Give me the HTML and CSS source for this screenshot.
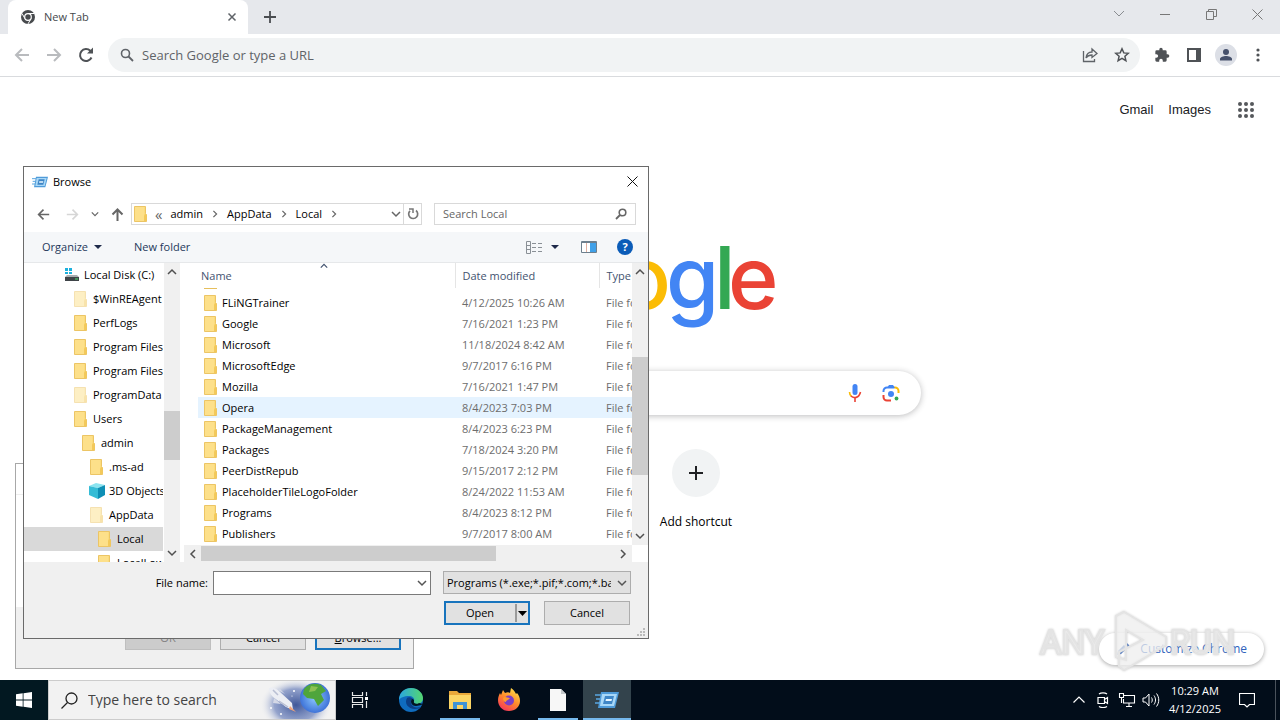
FILE: index.html
```html
<!DOCTYPE html>
<html lang="en">
<head>
  <meta charset="UTF-8" />
  <title>New Tab</title>
  <link rel="stylesheet" href="styles.css">
</head>
<body>
  <!-- shared icons -->
  <svg class="defs" width="0" height="0" aria-hidden="true">
    <symbol id="folder" viewBox="0 0 16 16">
      <path d="M1.500 .5h11v7l1 1v7h-12z" fill="#fbdc7c" stroke="#ecc565"/>
      <path d="M2 1h9v14H2z" fill="#fde08a"/>
      <path d="M11 15V9.500l1.500-2 1 2V15z" fill="#f3c95a"/>
    </symbol>
    <symbol id="chev-down" viewBox="0 0 10 10"><path d="M1 3l4 4 4-4" fill="none" stroke="currentColor" stroke-width="1.500"/></symbol>
    <symbol id="chev-up" viewBox="0 0 10 10"><path d="M1 7l4-4 4 4" fill="none" stroke="currentColor" stroke-width="1.500"/></symbol>
    <symbol id="chev-left" viewBox="0 0 10 10"><path d="M7 1L3 5l4 4" fill="none" stroke="currentColor" stroke-width="1.500"/></symbol>
    <symbol id="chev-right" viewBox="0 0 10 10"><path d="M3 1l4 4-4 4" fill="none" stroke="currentColor" stroke-width="1.500"/></symbol>
    <symbol id="arrow-left" viewBox="0 0 16 16"><path d="M15 8H2M8 2L2 8l6 6" fill="none" stroke="currentColor" stroke-width="2"/></symbol>
    <symbol id="arrow-right" viewBox="0 0 16 16"><path d="M1 8h13M8 2l6 6-6 6" fill="none" stroke="currentColor" stroke-width="2"/></symbol>
    <symbol id="run" viewBox="0 0 24 18">
      <path d="M6 1h18l-4 16H3z" fill="#4f9bd9"/>
      <path d="M7 3h15l-3 12H5z" fill="#a9d8f7"/>
      <path d="M10 5h9l-2 8H8z" fill="#3f86c6"/>
      <path d="M11 8h6l-.500 2h-6z" fill="#e8f6ff"/>
      <path d="M0 4h6M1 8h4M0 12h5" stroke="#5aa7e0" stroke-width="1.500"/>
    </symbol>
  </svg>

  <main class="desktop">
    <section class="browser">
      <header class="tabstrip">
        <div class="tab">
          <svg class="favicon" width="14" height="14" viewBox="0 0 14 14">
            <circle cx="7" cy="7" r="7" fill="#474a4d"/>
            <path d="M7 3.500h6.200M4 8.700L1 3.500M10 8.700L7 13.900" stroke="#fff" stroke-width="1"/>
            <circle cx="7" cy="7" r="3.300" fill="#474a4d" stroke="#fff" stroke-width="1.200"/>
          </svg>
          <span class="tab-title">New Tab</span>
          <button class="icon-btn" aria-label="Close tab"><svg width="10" height="10" viewBox="0 0 10 10"><path d="M1.500 1.500l7 7M8.500 1.500l-7 7" stroke="#5f6368" stroke-width="1.500"/></svg></button>
        </div>
        <button class="icon-btn new-tab" aria-label="New tab"><svg width="12" height="12" viewBox="0 0 12 12"><path d="M6 0v12M0 6h12" stroke="#4a4d51" stroke-width="1.800"/></svg></button>
        <div class="window-btns">
          <button class="icon-btn" aria-label="Search tabs"><svg width="12" height="12" viewBox="0 0 12 12"><path d="M1 3l5 5 5-5" fill="none" stroke="#8a8d91"/></svg></button>
          <button class="icon-btn" aria-label="Minimize"><svg width="10" height="10" viewBox="0 0 10 10"><path d="M0 5.500h10" stroke="#777"/></svg></button>
          <button class="icon-btn" aria-label="Restore"><svg width="11" height="11" viewBox="0 0 11 11"><path d="M.5 2.500h7v8h-7zM2.500 2.500v-2h8v7h-3" fill="none" stroke="#777"/></svg></button>
          <button class="icon-btn" aria-label="Close"><svg width="11" height="11" viewBox="0 0 11 11"><path d="M.5.5l10 10M10.500.5l-10 10" stroke="#777"/></svg></button>
        </div>
      </header>

      <div class="toolbar">
        <button class="icon-btn faded" aria-label="Back"><svg width="16" height="16"><use href="#arrow-left"/></svg></button>
        <button class="icon-btn faded" aria-label="Forward"><svg width="16" height="16"><use href="#arrow-right"/></svg></button>
        <button class="icon-btn" aria-label="Reload"><svg width="16" height="16" viewBox="0 0 16 16"><path d="M13.500 10.500A6 6 0 1 1 12.300 3.800L14 5.500" fill="none" stroke="#4f5256" stroke-width="2"/><path d="M15 .5v6H9z" fill="#4f5256"/></svg></button>
        <div class="omnibox">
          <svg width="14" height="14" viewBox="0 0 14 14"><circle cx="5.500" cy="5.500" r="4" fill="none" stroke="#5f6368" stroke-width="1.600"/><path d="M8.500 8.500l4.500 4.500" stroke="#5f6368" stroke-width="1.800"/></svg>
          <input class="omnibox-input" type="text" aria-label="Address" placeholder="Search Google or type a URL" />
          <button class="icon-btn" aria-label="Share"><svg width="16" height="16" viewBox="0 0 16 16"><path d="M1.500 4v10.500h11V12" fill="none" stroke="#5f6368" stroke-width="1.300"/><path d="M4 11c.5-4 2.500-6 6-6V2l5 4.500-5 4V8C7.500 8 5.500 8.800 4 11z" fill="none" stroke="#5f6368" stroke-width="1.300"/></svg></button>
          <button class="icon-btn" aria-label="Bookmark"><svg width="16" height="16" viewBox="0 0 16 16"><path d="M8 1.800l1.800 4.100 4.500.4-3.400 3 1 4.400L8 11.400l-3.900 2.300 1-4.400-3.400-3 4.500-.4z" fill="none" stroke="#4f5256" stroke-width="1.500"/></svg></button>
        </div>
        <div class="toolbar-end">
          <button class="icon-btn" aria-label="Extensions"><svg width="16" height="16" viewBox="0 0 24 24"><path d="M20.500 11H19V7a2 2 0 0 0-2-2h-4V3.500a2.500 2.500 0 0 0-5 0V5H4a2 2 0 0 0-2 2v3.800h1.500a2.700 2.700 0 0 1 0 5.400H2V20a2 2 0 0 0 2 2h3.800v-1.500a2.700 2.700 0 0 1 5.400 0V22H17a2 2 0 0 0 2-2v-4h1.500a2.500 2.500 0 0 0 0-5z" fill="#4f5256"/></svg></button>
          <button class="icon-btn" aria-label="Side panel"><svg width="14" height="14" viewBox="0 0 14 14"><path d="M1 1h12v12H1z" fill="#fff" stroke="#4f5256" stroke-width="2"/><path d="M9 1h4v12H9z" fill="#4f5256"/></svg></button>
          <button class="icon-btn" aria-label="Profile"><svg width="22" height="22" viewBox="0 0 22 22"><circle cx="11" cy="11" r="11" fill="#dcdfe6"/><circle cx="11" cy="8" r="3" fill="#45506b"/><path d="M5 16.500v-1.500c0-2 3.500-3 6-3s6 1 6 3v1.500z" fill="#45506b"/></svg></button>
          <button class="icon-btn" aria-label="Menu"><svg width="4" height="14" viewBox="0 0 4 14"><g fill="#4f5256"><circle cx="2" cy="2" r="1.600"/><circle cx="2" cy="7" r="1.600"/><circle cx="2" cy="12" r="1.600"/></g></svg></button>
        </div>
      </div>

      <div class="ntp">
        <nav class="ntp-nav">
          <a href="#">Gmail</a>
          <a href="#">Images</a>
          <button class="icon-btn apps" aria-label="Google apps"><svg width="16" height="16" viewBox="0 0 16 16"><g fill="#55585c"><circle cx="2" cy="2" r="2"/><circle cx="8" cy="2" r="2"/><circle cx="14" cy="2" r="2"/><circle cx="2" cy="8" r="2"/><circle cx="8" cy="8" r="2"/><circle cx="14" cy="8" r="2"/><circle cx="2" cy="14" r="2"/><circle cx="8" cy="14" r="2"/><circle cx="14" cy="14" r="2"/></g></svg></button>
        </nav>
        <svg class="logo" width="272" height="92" viewBox="0 0 272 92" role="img" aria-label="Google">
          <text y="66"><tspan x="0" fill="#4285f4">G</tspan><tspan x="66" fill="#ea4335">o</tspan><tspan x="115" fill="#fbbc05">o</tspan><tspan x="162" fill="#4285f4">g</tspan><tspan x="210" fill="#34a853">l</tspan><tspan x="224" fill="#ea4335">e</tspan></text>
        </svg>
        <div class="searchbox">
          <input class="searchbox-input" type="text" aria-label="Search Google" />
          <button class="icon-btn" aria-label="Voice search"><svg width="14" height="18" viewBox="0 0 14 18"><rect x="4.500" y="0" width="5" height="11" rx="2.500" fill="#4285f4"/><path d="M1.500 8c0 2 .8 3.500 2 4.500" fill="none" stroke="#fbbc05" stroke-width="1.600"/><path d="M3 12c2.500 2.500 8 2.500 9.500-4M7 13.500V18" fill="none" stroke="#ea4335" stroke-width="1.600"/></svg></button>
          <button class="icon-btn" aria-label="Search by image"><svg width="18" height="18" viewBox="0 0 18 18"><g fill="none" stroke-width="2"><path d="M1.500 8V7a3.500 3.500 0 0 1 3.500-3.500h7" stroke="#4285f4"/><path d="M12 3.500h1A3.500 3.500 0 0 1 16.500 7v2" stroke="#fbbc05"/><path d="M1.500 11v2A3.500 3.500 0 0 0 5 16.500h4" stroke="#ea4335"/></g><path d="M5 4l2-3h4l2 3z" fill="#4285f4"/><circle cx="9" cy="10" r="3" fill="#4285f4"/><circle cx="14.500" cy="14.500" r="1.900" fill="#34a853"/></svg></button>
        </div>
        <div class="shortcuts">
          <button class="shortcut">
            <span class="shortcut-icon"><svg width="14" height="14" viewBox="0 0 14 14"><path d="M7 0v14M0 7h14" stroke="#202124" stroke-width="2"/></svg></span>
            <span>Add shortcut</span>
          </button>
        </div>
        <button class="customize">
          <svg width="14" height="14" viewBox="0 0 14 14"><path d="M1 13l1-4 6-6 3 3-6 6zM9 2l1.500-1.500 3 3L12 5z" fill="#2f63bd"/></svg>
          Customize Chrome
        </button>
      </div>
    </section>

    <section class="window run-dialog" aria-label="Run">
      <div class="run-title"></div>
      <div class="run-body"></div>
      <div class="run-footer">
        <button class="win-btn" disabled>OK</button>
        <button class="win-btn">Cancel</button>
        <button class="win-btn primary"><u>B</u>rowse...</button>
      </div>
    </section>

    <section class="window browse" aria-label="Browse">
      <header class="titlebar">
        <svg width="16" height="12"><use href="#run"/></svg>
        <span>Browse</span>
        <button class="icon-btn close" aria-label="Close"><svg width="11" height="11" viewBox="0 0 11 11"><path d="M.5.5l10 10M10.500.5l-10 10" stroke="#111"/></svg></button>
      </header>

      <div class="navrow">
        <button class="icon-btn nav" aria-label="Back"><svg width="13" height="13"><use href="#arrow-left"/></svg></button>
        <button class="icon-btn nav off" aria-label="Forward"><svg width="13" height="13"><use href="#arrow-right"/></svg></button>
        <button class="icon-btn nav small" aria-label="Recent"><svg width="8" height="8"><use href="#chev-down"/></svg></button>
        <button class="icon-btn nav" aria-label="Up"><svg width="13" height="13" viewBox="0 0 13 13"><path d="M6.500 13V2M1.500 6.500l5-5 5 5" fill="none" stroke="currentColor" stroke-width="2"/></svg></button>
        <div class="address">
          <svg width="16" height="16"><use href="#folder"/></svg>
          <span class="crumb-sep">«</span>
          <span class="crumb">admin</span>
          <svg width="8" height="8"><use href="#chev-right"/></svg>
          <span class="crumb">AppData</span>
          <svg width="8" height="8"><use href="#chev-right"/></svg>
          <span class="crumb">Local</span>
          <svg width="8" height="8"><use href="#chev-right"/></svg>
          <button class="icon-btn history" aria-label="Previous locations"><svg width="10" height="10"><use href="#chev-down"/></svg></button>
          <button class="icon-btn refresh" aria-label="Refresh"><svg width="12" height="12" viewBox="0 0 12 12"><path d="M9 2.500A4.500 4.500 0 1 1 3 2.800" fill="none" stroke="#777" stroke-width="1.700"/><path d="M2 1h4v4" fill="none" stroke="#777" stroke-width="1.500"/></svg></button>
        </div>
        <div class="search-local">
          <input type="text" aria-label="Search Local" placeholder="Search Local" />
          <svg width="12" height="12" viewBox="0 0 12 12"><circle cx="7.500" cy="4.500" r="3.300" fill="none" stroke="#666" stroke-width="1.600"/><path d="M5 7L1 11" stroke="#666" stroke-width="1.800"/></svg>
        </div>
      </div>

      <div class="commands">
        <button class="command">Organize <svg width="8" height="4" viewBox="0 0 8 4"><path d="M0 0h8L4 4z" fill="#1e2a4a"/></svg></button>
        <button class="command">New folder</button>
        <div class="views">
          <button class="icon-btn" aria-label="View"><svg width="17" height="13" viewBox="0 0 17 13"><path d="M.5.5h4v12h-4zM.5 4.500h4M.5 8.500h4M6 2.500h4M12 2.500h4M6 6.500h4M12 6.500h4M6 10.500h4M12 10.500h4" fill="none" stroke="#8a9096"/></svg></button>
          <button class="icon-btn" aria-label="More views"><svg width="8" height="4" viewBox="0 0 8 4"><path d="M0 0h8L4 4z" fill="#1e2a4a"/></svg></button>
          <button class="icon-btn preview" aria-label="Preview pane"><svg width="16" height="12" viewBox="0 0 16 12"><path d="M.5.5h15v11H.5z" fill="#fff" stroke="#6d7f8d"/><path d="M9 2h6v9H9z" fill="#3fa0e8"/><path d="M1 1h14v1H1z" fill="#6d7f8d"/><path d="M5.500 2v9" stroke="#e0b0a0"/></svg></button>
          <button class="icon-btn help" aria-label="Help">?</button>
        </div>
      </div>

      <div class="panes">
        <ul class="tree">
          <li class="depth-0"><svg width="16" height="16" viewBox="0 0 16 16"><path d="M1 1h3v3H1zM5 1h3v3H5zM1 5h3v2H1zM5 5h3v2H5z" fill="#1cb0dd"/><path d="M3 8h10l2 2v4H1v-4z" fill="#a9adb0"/><path d="M1 10h14v4H1z" fill="#3f4448"/><path d="M11 12h3" stroke="#4be06a"/></svg>Local Disk (C:)</li>
          <li class="depth-1 hidden-item"><svg width="16" height="16"><use href="#folder"/></svg>$WinREAgent</li>
          <li class="depth-1"><svg width="16" height="16"><use href="#folder"/></svg>PerfLogs</li>
          <li class="depth-1"><svg width="16" height="16"><use href="#folder"/></svg>Program Files</li>
          <li class="depth-1"><svg width="16" height="16"><use href="#folder"/></svg>Program Files (x86)</li>
          <li class="depth-1 hidden-item"><svg width="16" height="16"><use href="#folder"/></svg>ProgramData</li>
          <li class="depth-1"><svg width="16" height="16"><use href="#folder"/></svg>Users</li>
          <li class="depth-2"><svg width="16" height="16"><use href="#folder"/></svg>admin</li>
          <li class="depth-3"><svg width="16" height="16"><use href="#folder"/></svg>.ms-ad</li>
          <li class="depth-3"><svg width="16" height="16" viewBox="0 0 16 16"><path d="M0 3l7-3 9 2-7 3z" fill="#8be4f0"/><path d="M0 3l9 2v11l-9-4z" fill="#35bcd6"/><path d="M9 5l7-3v10l-7 4z" fill="#0e8fb5"/></svg>3D Objects</li>
          <li class="depth-3 hidden-item"><svg width="16" height="16"><use href="#folder"/></svg>AppData</li>
          <li class="depth-4 selected"><svg width="16" height="16"><use href="#folder"/></svg>Local</li>
          <li class="depth-4"><svg width="16" height="16"><use href="#folder"/></svg>LocalLow</li>
        </ul>
        <div class="vscroll">
          <svg width="10" height="10"><use href="#chev-up"/></svg>
          <div class="track tree-track"><div class="thumb"></div></div>
          <svg width="10" height="10"><use href="#chev-down"/></svg>
        </div>
        <div class="files">
          <div class="files-view">
            <table class="file-table">
              <colgroup><col class="col-name"><col class="col-date"><col class="col-type"></colgroup>
              <thead>
                <tr><th>Name<svg class="sort" width="10" height="8"><use href="#chev-up"/></svg></th><th>Date modified</th><th>Type</th></tr>
              </thead>
              <tbody>
                <tr class="cut"><td><div class="cut-icon"></div></td><td></td><td></td></tr>
                <tr><td><svg width="16" height="16"><use href="#folder"/></svg>FLiNGTrainer</td><td>4/12/2025 10:26 AM</td><td>File folder</td></tr>
                <tr><td><svg width="16" height="16"><use href="#folder"/></svg>Google</td><td>7/16/2021 1:23 PM</td><td>File folder</td></tr>
                <tr><td><svg width="16" height="16"><use href="#folder"/></svg>Microsoft</td><td>11/18/2024 8:42 AM</td><td>File folder</td></tr>
                <tr><td><svg width="16" height="16"><use href="#folder"/></svg>MicrosoftEdge</td><td>9/7/2017 6:16 PM</td><td>File folder</td></tr>
                <tr><td><svg width="16" height="16"><use href="#folder"/></svg>Mozilla</td><td>7/16/2021 1:47 PM</td><td>File folder</td></tr>
                <tr class="hover"><td><svg width="16" height="16"><use href="#folder"/></svg>Opera</td><td>8/4/2023 7:03 PM</td><td>File folder</td></tr>
                <tr><td><svg width="16" height="16"><use href="#folder"/></svg>PackageManagement</td><td>8/4/2023 6:23 PM</td><td>File folder</td></tr>
                <tr><td><svg width="16" height="16"><use href="#folder"/></svg>Packages</td><td>7/18/2024 3:20 PM</td><td>File folder</td></tr>
                <tr><td><svg width="16" height="16"><use href="#folder"/></svg>PeerDistRepub</td><td>9/15/2017 2:12 PM</td><td>File folder</td></tr>
                <tr><td><svg width="16" height="16"><use href="#folder"/></svg>PlaceholderTileLogoFolder</td><td>8/24/2022 11:53 AM</td><td>File folder</td></tr>
                <tr><td><svg width="16" height="16"><use href="#folder"/></svg>Programs</td><td>8/4/2023 8:12 PM</td><td>File folder</td></tr>
                <tr><td><svg width="16" height="16"><use href="#folder"/></svg>Publishers</td><td>9/7/2017 8:00 AM</td><td>File folder</td></tr>
              </tbody>
            </table>
          </div>
          <div class="vscroll">
            <svg width="10" height="10"><use href="#chev-up"/></svg>
            <div class="track list-track"><div class="thumb"></div></div>
            <svg width="10" height="10"><use href="#chev-down"/></svg>
          </div>
          <div class="hscroll">
            <svg width="10" height="10"><use href="#chev-left"/></svg>
            <div class="track"><div class="thumb"></div></div>
            <svg width="10" height="10"><use href="#chev-right"/></svg>
          </div>
        </div>
      </div>

      <div class="dialog-footer">
        <label for="filename">File name:</label>
        <div class="combo">
          <input id="filename" type="text" />
          <svg width="10" height="10"><use href="#chev-down"/></svg>
        </div>
        <div class="actions">
          <div class="combo filter">
            <select aria-label="File type"><option>Programs (*.exe;*.pif;*.com;*.bat;*.cmd)</option></select>
            <svg width="10" height="10"><use href="#chev-down"/></svg>
          </div>
          <div class="btn-row">
            <button class="win-btn primary split"><span>Open</span><svg width="14" height="20" viewBox="0 0 14 20"><path d="M2 1v18" stroke="#555"/><path d="M4 8h9l-4.500 5z" fill="#000"/></svg></button>
            <button class="win-btn">Cancel</button>
          </div>
        </div>
        <svg class="grip" width="10" height="10" viewBox="0 0 10 10"><path d="M7 1h2v2H7zM4 4h2v2H4zM7 4h2v2H7zM1 7h2v2H1zM4 7h2v2H4zM7 7h2v2H7z" fill="#bbb"/></svg>
      </div>
    </section>

    <svg class="watermark" width="200" height="66" viewBox="0 0 200 66" role="img" aria-label="ANY RUN">
      <g fill="#fff" fill-opacity=".5" stroke="#e4e4e4" stroke-width="2">
        <text x="2" y="46">ANY</text>
        <text x="132" y="46">RUN</text>
        <path d="M86 4l42 25v8L86 62l-5-4V44l24-12-17-10v30l-10-3V8z" fill-rule="evenodd"/>
      </g>
    </svg>
  </main>

  <footer class="taskbar">
    <button class="icon-btn start" aria-label="Start"><svg width="16" height="16" viewBox="0 0 16 16"><path d="M0 2.300L6.700 1.300v6.200H0zM7.500 1.200L16 0v7.500H7.500zM0 8.500h6.700v6.200L0 13.700zM7.500 8.500H16V16l-8.500-1.200z" fill="#fff"/></svg></button>
    <div class="task-search">
      <svg width="17" height="17" viewBox="0 0 17 17"><circle cx="10.500" cy="6.500" r="5.500" fill="none" stroke="#222" stroke-width="1.300"/><path d="M6.500 10.500L.5 16.500" stroke="#222" stroke-width="1.300"/></svg>
      <input type="text" aria-label="Search" placeholder="Type here to search" />
      <svg class="space" width="76" height="38" viewBox="0 0 76 38">
        <defs>
          <radialGradient id="sky"><stop offset="0" stop-color="#3f5799"/><stop offset=".6" stop-color="#7c8fc2" stop-opacity=".8"/><stop offset="1" stop-color="#f2f2f2" stop-opacity="0"/></radialGradient>
          <radialGradient id="sea"><stop offset="0" stop-color="#8cc8ff"/><stop offset="1" stop-color="#3f73d8"/></radialGradient>
        </defs>
        <ellipse cx="37" cy="24" rx="36" ry="27" fill="url(#sky)"/>
        <path d="M10 7c5-1 8 1 11 4l12 11 1 7-7-3-13-10c-3-3-4-6-4-9z" fill="#eceef4"/>
        <path d="M14 9l5 5M20 20l9 6" stroke="#b9bfd3" stroke-width="1.500"/>
        <path d="M19 9l2-1 5 5M15 17l-1 5 8 1" fill="#d4d8e6"/>
        <path d="M31 25l6 6-7-3z" fill="#f0a37a"/>
        <circle cx="56" cy="17" r="15" fill="url(#sea)"/>
        <path d="M45 8c5-6 11-6 17-4l5 6-5 3 3 6-6 6-4-7-7-1-4-4z" fill="#4fa53c"/>
        <path d="M52 5l7 1-3 4-6 1z" fill="#8cc152"/>
        <g fill="#fff"><circle cx="12" cy="27" r="1"/><circle cx="35" cy="10" r="1"/><circle cx="22" cy="33" r="1"/><circle cx="33" cy="15" r=".6"/></g>
      </svg>
    </div>
    <div class="apps-row">
      <button class="icon-btn app task-view" aria-label="Task view"><svg width="18" height="16" viewBox="0 0 18 16"><path d="M1.500 0v3.500h10V0M1.500 16v-3.500h10V16M1.500 5.500h10v5h-10zM15.500 0v4M15.500 9v7" fill="none" stroke="#e8e8e8" stroke-width="1.200"/><path d="M14 5h3v3h-3z" fill="#fff"/></svg></button>
      <button class="icon-btn app" aria-label="Edge"><svg width="24" height="24" viewBox="0 0 24 24">
        <defs><linearGradient id="edge-a" x1="0" x2="1"><stop offset="0" stop-color="#2aa7e0"/><stop offset="1" stop-color="#54d670"/></linearGradient></defs>
        <circle cx="12" cy="12" r="12" fill="#0f6cbf"/>
        <path d="M0 12C0 4 6 0 12 0c7 0 12 5 12 10 0 4-3 6-6 6-3 0-4-1-3-3 1-3-2-5-5-5C5 8 1 10 0 12z" fill="url(#edge-a)"/>
        <path d="M8 10c-3 5 1 11 8 11 3 0 5-1 6-2-3 1-10 1-10-5 0-2 1-3 2-3-2-2-5-2-6-1z" fill="#0b3f86"/>
        <path d="M13 11c-2 2-1 7 4 7 2 0 4-1 5-1l2-1-4-1c-3 2-6 0-5-2 0-1 0-2-2-2z" fill="#021521"/>
      </svg></button>
      <button class="icon-btn app running" aria-label="File Explorer"><svg width="22" height="20" viewBox="0 0 22 20"><path d="M0 1h8l2 2h12v16H0z" fill="#e9a83a"/><path d="M0 5h22v14H0z" fill="#fbd565"/><path d="M4 19v-7h14v7h-4v-4H8v4z" fill="#3f93d6"/></svg></button>
      <button class="icon-btn app" aria-label="Firefox"><svg width="24" height="24" viewBox="0 0 24 24">
        <defs><linearGradient id="fox" x1=".8" y1="0" x2=".2" y2="1"><stop offset="0" stop-color="#ffe14a"/><stop offset=".5" stop-color="#ff8a2a"/><stop offset="1" stop-color="#f5305f"/></linearGradient></defs>
        <path d="M12 23C5 23 1 18 1 12c0-3 1-5 2-7l1 2 2-5 2 3c2-1 4-1 5 0l1-5c3 2 4 4 5 6l1-1c2 2 3 5 3 8 0 6-5 10-11 10z" fill="url(#fox)"/>
        <circle cx="12" cy="12.500" r="5" fill="#7b3fc4"/>
        <path d="M6 10c2-2 4 0 7 0-1 2-4 2-4 4-2 0-3-2-3-4z" fill="#ff9a2d"/>
      </svg></button>
      <button class="icon-btn app running" aria-label="Document"><svg width="16" height="22" viewBox="0 0 16 22"><path d="M0 0h11l5 5v17H0z" fill="#f7f7f7"/><path d="M11 0v5h5z" fill="#c4c8ca"/></svg></button>
      <button class="icon-btn app running active" aria-label="Run"><svg width="24" height="18"><use href="#run"/></svg></button>
    </div>
    <div class="tray">
      <svg width="12" height="12" viewBox="0 0 12 12"><path d="M.5 8.500L6 3l5.500 5.500" fill="none" stroke="#fff" stroke-width="1.200"/></svg>
      <svg width="14" height="16" viewBox="0 0 14 16"><path d="M2 5.500h6.500v6H2zM8.500 7.500l3-2v6l-3-2M3 2c2-1.500 6-1.500 8 0M3 14.500c2 1.500 6 1.500 8 0" fill="none" stroke="#fff" stroke-width="1.200"/></svg>
      <svg width="16" height="14" viewBox="0 0 16 14"><path d="M5 2.500h10.500v7.500H4.500V6M.5.5h4v4h-4zM2.500 4.500V10M7 13.500h6M10 10v3.500" fill="none" stroke="#fff" stroke-width="1.100"/></svg>
      <svg width="17" height="14" viewBox="0 0 17 14"><path d="M.5 5h2.500l3.500-4v12L3 9H.5zM9 4.500c1 1.500 1 3.500 0 5M11.500 2.500c2 3 2 6 0 9M14 .5c3 4 3 9 0 13" fill="none" stroke="#fff"/></svg>
      <div class="clock"><span>10:29 AM</span><span>4/12/2025</span></div>
      <button class="icon-btn notify" aria-label="Notifications"><svg width="16" height="16" viewBox="0 0 16 16"><path d="M.5 1.500h15v11h-5L8 15l-2.500-2.500h-5z" fill="none" stroke="#fff" stroke-width="1.200"/></svg></button>
    </div>
  </footer>
</body>
</html>
```
FILE: styles.css
```css
* {
  box-sizing: border-box;
}
body {
  margin: 0;
  height: 100vh;
  display: flex;
  flex-direction: column;
  overflow: hidden;
  font-family: "Open Sans", "Noto Sans", sans-serif;
  font-size: 11px;
  line-height: 16px;
  color: #000;
}
button, input, select {
  font: inherit;
  color: inherit;
}
svg {
  flex-shrink: 0;
}
.defs {
  position: absolute;
}
.icon-btn {
  display: flex;
  align-items: center;
  justify-content: center;
  border: 0;
  padding: 0;
  background: none;
}

.desktop {
  position: relative;
  flex: 1;
  min-height: 0;
}

/* browser */
.browser {
  height: 100%;
  display: flex;
  flex-direction: column;
  background: #fff;
}
.tabstrip {
  display: flex;
  height: 34px;
  padding-left: 8px;
  background: #e6e8ec;
}
.tab {
  display: flex;
  align-items: center;
  width: 240px;
  padding: 0 11px 0 13px;
  border-radius: 8px 8px 0 0;
  background: #fff;
}
.tab-title {
  flex: 1;
  margin-left: 9px;
  color: #45484c;
}
.new-tab {
  width: 44px;
}
.window-btns {
  display: flex;
  margin-left: auto;
  height: 28px;
}
.window-btns .icon-btn {
  width: 46px;
}

.toolbar {
  display: flex;
  align-items: center;
  height: 43px;
  padding: 0 18px 0 6px;
  border-bottom: 1px solid #d9dbde;
  color: #5f6368;
}
.toolbar > .icon-btn {
  width: 32px;
}
.toolbar > .faded {
  color: #b9bbbe;
}
.omnibox {
  flex: 1;
  display: flex;
  align-items: center;
  gap: 16px;
  height: 34px;
  margin-left: 6px;
  padding: 0 10px 0 12px;
  border-radius: 17px;
  background: #f1f3f4;
}
.omnibox-input {
  flex: 1;
  margin-left: -8px;
  border: 0;
  padding: 0;
  background: none;
  font-size: 13px;
}
.omnibox-input::placeholder {
  color: #5f6368;
}
.toolbar-end {
  display: flex;
  align-items: center;
  margin-left: 6px;
}
.toolbar-end .icon-btn {
  width: 32px;
}
.toolbar-end .icon-btn:last-child {
  margin-right: -12px;
}

/* new tab page */
.ntp {
  position: relative;
  flex: 1;
  display: flex;
  flex-direction: column;
  align-items: center;
}
.ntp-nav {
  align-self: stretch;
  display: flex;
  justify-content: flex-end;
  align-items: center;
  gap: 15px;
  height: 65px;
  padding-right: 26px;
  font-family: "Liberation Sans", Arial, sans-serif;
  font-size: 13px;
}
.ntp-nav a {
  color: #202124;
  text-decoration: none;
}
.apps {
  margin-left: 12px;
}
.logo {
  margin-top: 101px;
  font-family: Inter, sans-serif;
  font-size: 86px;
  font-weight: 500;
}
.searchbox {
  display: flex;
  align-items: center;
  gap: 20px;
  width: 562px;
  height: 44px;
  margin-top: 36px;
  padding: 0 21px;
  border-radius: 22px;
  background: #fff;
  box-shadow: 0 1px 6px rgba(32, 33, 36, .3);
}
.searchbox-input {
  flex: 1;
  border: 0;
  background: none;
}
.shortcuts {
  display: grid;
  grid-template-columns: 112px 112px;
  margin-top: 34px;
}
.shortcut {
  grid-column: 2;
  display: flex;
  flex-direction: column;
  align-items: center;
  gap: 17px;
  border: 0;
  padding: 0;
  background: none;
  font-size: 12px;
}
.shortcut-icon {
  display: flex;
  align-items: center;
  justify-content: center;
  width: 48px;
  height: 48px;
  border-radius: 50%;
  background: #f1f3f4;
}
.customize {
  position: absolute;
  right: 16px;
  bottom: 15px;
  display: flex;
  align-items: center;
  gap: 10px;
  height: 32px;
  padding: 0 17px;
  border: 0;
  border-radius: 16px;
  background: #fff;
  box-shadow: 0 1px 4px rgba(0, 0, 0, .35);
  color: #2f63bd;
  font-size: 12px;
}

/* windows */
.window {
  position: absolute;
  display: flex;
  flex-direction: column;
  border: 1px solid #6a6a6a;
  background: #fff;
}
.win-btn {
  width: 86px;
  height: 24px;
  border: 1px solid #adadad;
  padding: 0;
  background: #e1e1e1;
}
.win-btn.primary {
  border: 2px solid #1874bd;
}
.win-btn:disabled {
  border-color: #bfbfbf;
  background: #ccc;
  color: #838383;
}
.run-dialog {
  left: 15px;
  top: 463px;
  width: 399px;
  border-color: #a8a8a8;
}
.run-title {
  height: 31px;
  border-bottom: 1px solid #eee;
}
.run-body {
  height: 112px;
}
.run-footer {
  display: flex;
  justify-content: flex-end;
  gap: 9px;
  padding: 19px 12px 18px;
  background: #f0f0f0;
}
.browse {
  left: 23px;
  top: 166px;
  width: 626px;
}
.titlebar {
  display: flex;
  align-items: center;
  gap: 5px;
  height: 29px;
  padding: 0 10px 0 8px;
}
.close {
  margin-left: auto;
}

.navrow {
  display: flex;
  align-items: center;
  height: 36px;
  padding: 0 12px 0 5px;
  color: #666;
}
.nav {
  width: 28px;
}
.nav.off {
  width: 30px;
  color: #d6d6d6;
}
.nav.small {
  width: 16px;
}
.address {
  display: flex;
  align-items: center;
  gap: 8px;
  width: 291px;
  height: 22px;
  margin-right: 12px;
  padding-left: 1px;
  border: 1px solid #d9d9d9;
}
.crumb-sep {
  margin-left: -2px;
  font-size: 15px;
}
.crumb {
  color: #000;
}
.history {
  margin-left: auto;
}
.refresh {
  width: 18px;
  height: 20px;
  margin-left: -6px;
  border-left: 1px solid #d9d9d9;
}
.search-local {
  flex: 1;
  display: flex;
  align-items: center;
  height: 22px;
  padding: 0 8px;
  border: 1px solid #d9d9d9;
}
.search-local input {
  flex: 1;
  min-width: 0;
  border: 0;
  padding: 0;
}
.search-local input::placeholder {
  color: #666;
}

.commands {
  display: flex;
  align-items: center;
  gap: 32px;
  height: 31px;
  padding: 0 15px 0 18px;
  border-bottom: 1px solid #e6e8ea;
  background: #f5f7f9;
  color: #1e395b;
}
.command {
  display: flex;
  align-items: center;
  gap: 6px;
  border: 0;
  padding: 0;
  background: none;
}
.views {
  display: flex;
  align-items: center;
  gap: 8px;
  margin-left: auto;
}
.preview {
  margin: 0 12px 0 14px;
}
.help {
  width: 16px;
  height: 16px;
  border-radius: 50%;
  background: #0b5cb8;
  color: #fff;
  font-weight: bold;
}

.panes {
  display: flex;
  height: 299px;
}
.tree {
  width: 139px;
  margin: 0 1px 0 0;
  padding: 0;
  overflow: hidden;
  list-style: none;
}
.tree li {
  display: flex;
  align-items: center;
  gap: 4px;
  height: 24px;
  white-space: nowrap;
}
.tree .depth-0 { padding-left: 40px; }
.tree .depth-1 { padding-left: 49px; }
.tree .depth-2 { padding-left: 57px; }
.tree .depth-3 { padding-left: 65px; }
.tree .depth-4 { padding-left: 73px; }
.tree .hidden-item svg {
  opacity: .5;
}
.tree .selected {
  background: #d9d9d9;
}

.vscroll, .hscroll {
  display: flex;
  align-items: center;
  background: #f0f0f0;
  color: #505050;
}
.vscroll {
  flex-direction: column;
  width: 16px;
  padding: 4px 0;
}
.hscroll {
  height: 17px;
  padding: 0 4px;
}
.track {
  flex: 1;
  display: flex;
}
.vscroll .track {
  width: 100%;
  flex-direction: column;
}
.thumb {
  background: #cdcdcd;
}
.tree-track {
  padding-top: 134px;
}
.tree-track .thumb {
  height: 49px;
}
.list-track {
  padding-top: 80px;
}
.list-track .thumb {
  height: 118px;
}
.hscroll .thumb {
  width: 295px;
  height: 15px;
  margin-left: 3px;
}

.files {
  flex: 1;
  min-width: 0;
  display: grid;
  grid-template-columns: 1fr 16px;
  grid-template-rows: 1fr 17px;
  padding-left: 4px;
}
.files-view {
  min-width: 0;
  overflow: hidden;
  padding-left: 14px;
}
.file-table {
  width: 100%;
  table-layout: fixed;
  border-collapse: collapse;
}
.col-name {
  width: 257px;
}
.col-date {
  width: 144px;
}
.file-table th, .file-table td {
  padding: 0 0 0 7px;
  overflow: hidden;
  white-space: nowrap;
  text-align: left;
}
.file-table th {
  position: relative;
  height: 25px;
  border-right: 1px solid #e5e5e5;
  color: #43536f;
  font-weight: normal;
}
.file-table th:first-child {
  padding-left: 3px;
}
.file-table th:last-child {
  border-right: 0;
}
.sort {
  position: absolute;
  top: -1px;
  left: 47%;
}
.file-table td {
  height: 21px;
  color: #6d6d6d;
}
.file-table td:first-child {
  padding-left: 5px;
  color: #000;
}
.file-table td svg {
  margin-right: 3px;
  vertical-align: -4px;
}
.file-table .cut td {
  height: 4px;
}
.cut-icon {
  width: 13px;
  height: 4px;
  margin-left: 1px;
  border-top: 1px solid #e6bf5c;
}
.file-table .hover {
  background: #e5f3ff;
}

.dialog-footer {
  position: relative;
  display: grid;
  grid-template-columns: 184px 218px 188px;
  align-items: start;
  column-gap: 5px;
  padding: 9px 0 13px;
  background: #f0f0f0;
}
.dialog-footer label {
  justify-self: end;
  padding-top: 4px;
}
.combo {
  position: relative;
}
.combo svg {
  position: absolute;
  right: 4px;
  top: 7px;
  color: #555;
  pointer-events: none;
}
.combo input {
  display: block;
  width: 100%;
  height: 24px;
  border: 1px solid #7a7a7a;
  background: #fff;
}
.combo select {
  display: block;
  width: 100%;
  height: 23px;
  padding: 0 19px 0 3px;
  border: 1px solid #adadad;
  border-radius: 0;
  background: #e1e1e1;
  appearance: none;
}
.actions {
  display: flex;
  flex-direction: column;
  gap: 7px;
  margin-left: 7px;
  width: 188px;
}
.btn-row {
  display: flex;
  justify-content: space-between;
  padding: 0 1px;
}
.split {
  display: flex;
  align-items: center;
}
.split span {
  flex: 1;
}
.grip {
  position: absolute;
  right: 2px;
  bottom: 1px;
}

.watermark {
  position: absolute;
  right: 42px;
  bottom: 6px;
  pointer-events: none;
  font-family: Roboto, "Liberation Sans", sans-serif;
  font-size: 33px;
  filter: drop-shadow(0 0 1px #ccc);
}

/* taskbar */
.taskbar {
  display: flex;
  height: 40px;
  background: #020d1a;
  color: #fff;
}
.start {
  width: 48px;
  background: #021821;
}
.task-search {
  display: flex;
  align-items: center;
  width: 288px;
  padding-left: 12px;
  border: 1px solid #ccc;
  background: #f2f2f2;
}
.task-search input {
  flex: 1;
  min-width: 0;
  margin-left: 10px;
  border: 0;
  padding: 0;
  background: none;
  font-size: 14px;
}
.task-search input::placeholder {
  color: #444;
}
.apps-row {
  display: flex;
  gap: 1px;
}
.app {
  position: relative;
  width: 48px;
}
.task-view {
  margin-right: 2px;
}
.running::after {
  content: "";
  position: absolute;
  left: 4px;
  right: 4px;
  bottom: 0;
  height: 2px;
  background: #76b9ed;
}
.active {
  background: #33434c;
}
.active::after {
  left: 0;
  right: 0;
}
.tray {
  display: flex;
  align-items: center;
  margin-left: auto;
  margin-right: 4px;
  padding-right: 3px;
  border-right: 1px solid #4a525c;
}
.tray > svg {
  width: 24px;
}
.clock {
  display: flex;
  flex-direction: column;
  align-items: center;
  width: 54px;
  margin-left: 5px;
  line-height: 18px;
}
.notify {
  width: 50px;
}
```
